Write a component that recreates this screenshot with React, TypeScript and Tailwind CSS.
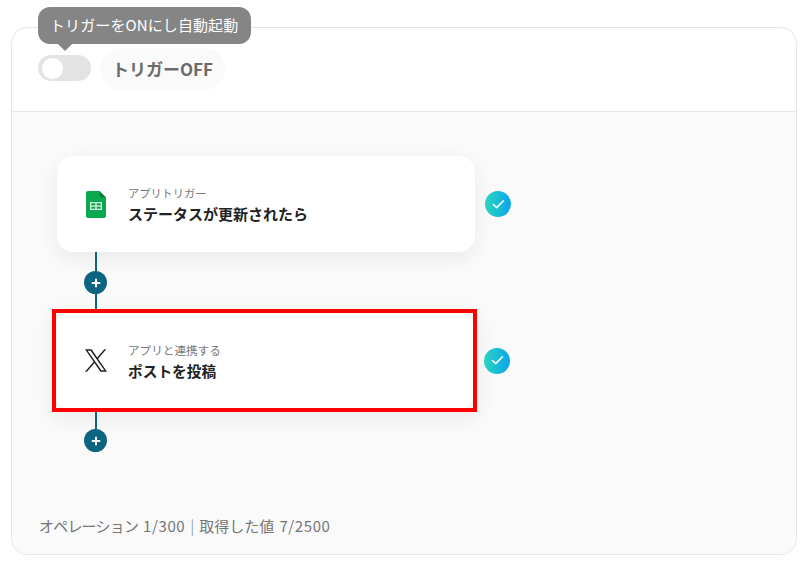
import { Plus, Check } from 'lucide-react'

const font = { fontFamily: '"Noto Sans CJK JP", "Noto Sans", sans-serif' }

function SheetsIcon() {
  return (
    <svg width="20" height="27" viewBox="0 0 20 27">
      <path d="M2 0h11.5L20 6.5V25a2 2 0 0 1-2 2H2a2 2 0 0 1-2-2V2a2 2 0 0 1 2-2z" fill="#0aa84f" />
      <path d="M13.5 0L20 6.5h-4.5a2 2 0 0 1-2-2z" fill="#0a7f3b" />
      <path d="M4 11h12v8H4z" fill="#d9f2e2" />
      <path d="M5.3 12.3h4v2.1h-4zM10.7 12.3h4v2.1h-4zM5.3 15.7h4v2h-4zM10.7 15.7h4v2h-4z" fill="#0aa84f" />
    </svg>
  )
}

function XIcon() {
  return (
    <svg width="22" height="23" viewBox="0 0 1200 1227" fill="#222">
      <path d="M714.163 519.284L1160.89 0H1055.03L667.137 450.887L357.328 0H0L468.492 681.821L0 1226.37H105.866L515.491 750.218L842.672 1226.37H1200L714.137 519.284H714.163ZM569.165 687.828L521.697 619.934L144.011 79.694H306.615L611.412 515.685L658.88 583.579L1055.08 1150.3H892.476L569.165 687.854V687.828Z" />
    </svg>
  )
}

function CheckBadge() {
  return (
    <div className="w-[26px] h-[26px] rounded-full bg-gradient-to-r from-[#2dd4bf] to-[#0ea5e9] flex items-center justify-center">
      <Check size={15} strokeWidth={2.5} className="text-white" />
    </div>
  )
}

function Connector({ lead, tail }: { lead: number; tail: number }) {
  return (
    <div className="flex flex-col items-center w-[23px]">
      <div className="w-[2px] bg-[#0b6480]" style={{ height: lead }} />
      <div className="w-[23px] h-[23px] rounded-full bg-[#0b6480] flex items-center justify-center">
        <Plus size={12} strokeWidth={4} className="text-white" />
      </div>
      {tail > 0 && <div className="w-[2px] bg-[#0b6480]" style={{ height: tail }} />}
    </div>
  )
}

export default function App() {
  return (
    <div className="w-[811px] h-[562px] bg-white pt-[27px] pl-[11px] overflow-hidden" style={font}>
      <div className="relative w-[786px] h-[528px] border border-[#e6e6e6] rounded-2xl flex flex-col">
        {/* tooltip */}
        <div className="absolute left-[26px] top-[-21px] h-[37px] w-[213px] pl-[12px] rounded-xl bg-[#858585] text-white text-[15px] tracking-[0.1px] flex items-center">
          トリガーをONにし自動起動
          <div className="absolute left-[22px] bottom-[-5px] w-[10px] h-[10px] bg-[#858585] rotate-45" />
        </div>

        <div className="h-[84px] shrink-0 border-b border-[#e6e6e6] flex items-center pl-[26px] gap-[9px]">
          <div className="w-[53px] h-[26px] mt-[-3px] rounded-full bg-[#e3e3e3] flex items-center pl-[4px]">
            <div className="w-[21px] h-[21px] rounded-full bg-white" />
          </div>
          <div className="h-[42px] mt-[-2px] px-[12px] rounded-full bg-[#fafafa] flex items-center text-[17px] font-bold text-[#6b6b6b]">
            トリガーOFF
          </div>
        </div>

        <div className="flex-1 bg-[#fafafa] rounded-b-2xl flex flex-col pt-[44px] pl-[45px]">
          <div className="flex items-center gap-[10px]">
            <div className="w-[418px] h-[96px] bg-white rounded-2xl shadow-[0_6px_20px_rgba(0,0,0,0.07)] flex items-center pl-[29px]">
              <SheetsIcon />
              <div className="ml-[22px]">
                <div className="text-[11.2px] leading-[16px] mt-[1px] text-[#777]">アプリトリガー</div>
                <div className="text-[15px] leading-[22px] mt-[2px] font-bold text-[#222]">ステータスが更新されたら</div>
              </div>
            </div>
            <CheckBadge />
          </div>

          <div className="pl-[27px]">
            <Connector lead={19} tail={15} />
          </div>

          <div className="flex items-center gap-[7px] ml-[-5px]">
            <div className="w-[425px] h-[103px] bg-[#f4f4f4] border-4 border-[#ff0000] shadow-[0_6px_20px_rgba(0,0,0,0.07)]">
              <div className="w-full h-full bg-white rounded-xl flex items-center pl-[29px]">
                <XIcon />
                <div className="ml-[21px]">
                  <div className="text-[11.6px] leading-[16px] mt-[3px] text-[#777]">アプリと連携する</div>
                  <div className="text-[14.7px] leading-[22px] mt-[2px] font-bold text-[#222]">ポストを投稿</div>
                </div>
              </div>
            </div>
            <CheckBadge />
          </div>

          <div className="pl-[27px]">
            <Connector lead={17} tail={0} />
          </div>

          <div className="mt-[63px] ml-[-18px] text-[15px] leading-[22px] text-[#757575]">
            <span className="tracking-[-0.8px]">オペレーション</span>
            <span className="tracking-[0.6px] ml-[5px]">1/300</span>
            <span className="text-[#8fa9c4] mx-[5px]">|</span>
            <span>取得した値</span>
            <span className="tracking-[0.6px] ml-[5px]">7/2500</span>
          </div>
        </div>
      </div>
    </div>
  )
}
